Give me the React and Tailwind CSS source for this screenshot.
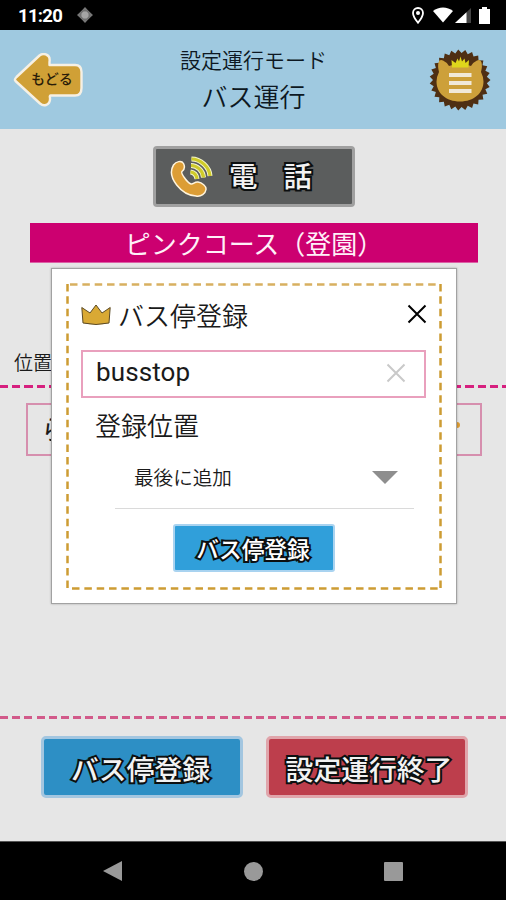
const OUTLINE = "[paint-order:stroke_fill] [-webkit-text-stroke:4px_#0c0f10]";

// zigzag outline of the lion's mane
function manePoints(cx, cy, outer, inner, teeth) {
  const pts = [];
  for (let i = 0; i < teeth * 2; i++) {
    const r = i % 2 ? inner : outer;
    const a = (Math.PI * i) / teeth;
    pts.push(`${(cx + r * Math.cos(a)).toFixed(2)},${(cy + r * Math.sin(a)).toFixed(2)}`);
  }
  return pts.join(" ");
}

function StatusBar() {
  return (
    <div className="h-[30px] shrink-0 bg-black flex items-center justify-between pl-[18px] pr-[16px] text-white">
      <div className="flex items-center gap-[14px] pt-[2px]">
        <span className="font-['Roboto'] font-bold text-[18.5px] leading-none w-[45px] tracking-[-0.7px]">11:20</span>
        <svg width="16" height="16" viewBox="0 0 16 16" className="-mt-[2px]">
          <path d="M8 0l3 3.2 1.8 1.8L16 8l-3.2 3L11 12.8 8 16l-3-3.2L3.2 11 0 8l3.2-3L5 3.2z" fill="#777" />
          <circle cx="8" cy="8" r="4.2" fill="#a4a4a4" stroke="#666" />
        </svg>
      </div>
      <div className="flex items-center">
        <svg width="12" height="17" viewBox="0 0 12 17" className="mr-[9px]">
          <path d="M6 1a5 5 0 0 0-5 5c0 3.6 5 9.8 5 9.8S11 9.6 11 6a5 5 0 0 0-5-5z" fill="none" stroke="#fff" strokeWidth="1.8" />
          <circle cx="6" cy="6" r="2" fill="#fff" />
        </svg>
        <svg width="20" height="16" viewBox="0 0 20 16" className="mr-[2px]">
          <path d="M0 4C5.5-.8 14.500-.8 20 4L10 15.500z" fill="#fff" />
        </svg>
        <svg width="17" height="17" viewBox="0 0 17 17" className="mr-[7px]">
          <path d="M16 1v15H0z" fill="#444" />
          <path d="M11.500 5.200v10.800H0z" fill="#fff" />
        </svg>
        <svg width="11" height="17" viewBox="0 0 11 17">
          <path d="M3 0h5v2h3v15H0V2h3z" fill="#fff" />
        </svg>
      </div>
    </div>
  );
}

function BackButton() {
  return (
    <button className="relative w-[70px] h-[54px] block">
      <svg width="70" height="54" viewBox="0 0 70 54">
        <path
          d="M2.500 28Q1 26.500 3.500 24L26.500 2.500Q30 0 33 1.500 37.500 3 36.500 9V12H62Q68.500 12 68.500 19V35Q68.500 42.500 62 42.500H37.500Q36.500 42.500 37 45 37.500 50.500 33 52 30 53 27 50.500Z"
          fill="#d0a036"
          stroke="#f6f0e4"
          strokeWidth="2.400"
          strokeLinejoin="round"
        />
      </svg>
      <span className="absolute left-[18px] top-[15px] text-[14px] leading-[20px] font-medium text-[#2a1c08] whitespace-nowrap">
        もどる
      </span>
    </button>
  );
}

function LionMenu() {
  return (
    <svg width="62" height="62" viewBox="0 0 62 62">
      <polygon points={manePoints(31, 31, 30.5, 27, 27)} fill="#4f2f13" />
      <path
        d="M10 23Q8.500 17 9.500 13.500 10.500 10 14 11.500 17.500 13 20 17 31 13 42 17 44.500 13 48 11.500 51.500 10 52.500 13.500 53.500 17 52 23 54.500 28 54.500 32.500C54.500 44 45 52.500 31 52.500S7.500 44 7.500 32.500Q7.500 28 10 23z"
        fill="#cda03a"
      />
      <path d="M23 18.500l-.5-7.500 4 3L28.500 9.500l1.500 3L31.500 7.500l1.500 5L35.500 9.500l1 4.500 3.500-3-.5 7.500z" fill="#dfd61c" />
      <g fill="#f1e9d8">
        <rect x="20" y="24" width="22.500" height="4" />
        <rect x="20" y="32" width="22.500" height="4" />
        <rect x="20" y="40" width="22.500" height="4" />
      </g>
    </svg>
  );
}

function Header() {
  return (
    <header className="h-[99px] shrink-0 bg-[#9fc9e0] flex items-center justify-between pl-[13px] pr-[15px] text-[#0d1822]">
      <BackButton />
      <div className="text-center -mt-[3px] pr-[18px] pl-[13px]">
        <p className="text-[21px] leading-[36px] font-[350]">設定運行モード</p>
        <p className="text-[26px] leading-[38px] font-[350]">バス運行</p>
      </div>
      <button className="block">
        <LionMenu />
      </button>
    </header>
  );
}

function PhoneIcon() {
  return (
    <svg width="44" height="44" viewBox="0 0 44 44">
      <path
        d="M3.500 10C6 6.500 11.500 5 13.500 8.500c1.500 3 1 6-1.500 8-1.500 1.500 5 11 9 12.500 2.500.5 3.500-2.500 7-2 4 .5 8.500 4.500 8 7.500-.5 4-5 7.500-10 6.500C12 40.500-4 22.500 3.500 10z"
        fill="#dc9d35"
        stroke="#fff4dc"
        strokeWidth="1.500"
      />
      <g fill="none">
        <g stroke="#f6f6d0" strokeWidth="5">
          <path d="M21.500 4c9 0 18 8 18.500 17M21 10.500c6 0 12 5 12.500 12M20.500 17c4 .5 6 3 6.500 7" />
        </g>
        <g stroke="#cfcb2a" strokeWidth="3.200">
          <path d="M21.500 4c9 0 18 8 18.500 17M21 10.500c6 0 12 5 12.500 12M20.500 17c4 .5 6 3 6.500 7" />
        </g>
      </g>
    </svg>
  );
}

function Crown() {
  return (
    <svg width="30" height="22" viewBox="0 0 30 22">
      <path
        d="M.8 3.500L9 9 15 1l6 8 8.200-5.500-1.200 15.500Q15 22 2 19z"
        fill="#d9a934"
        stroke="#5b4a25"
        strokeWidth="1"
        strokeLinejoin="round"
      />
    </svg>
  );
}

function Cross({ className }) {
  return (
    <svg width="20" height="20" viewBox="0 0 20 20" className={className}>
      <path d="M1.500 1.500l17 17M18.500 1.500l-17 17" stroke="currentColor" strokeWidth="2" />
    </svg>
  );
}

function BusStopDialog() {
  return (
    <div className="absolute left-[51px] top-[139px] w-[406px] h-[336px] bg-white border border-[#a2a2a2] pt-[14px] pl-[14px] shadow-[0_0_2px_#0004]">
      <div className="relative w-[376px] h-[308px] pt-[17px] px-[15px]">
        {/* dashed frame */}
        <svg width="376" height="308" className="absolute inset-0" fill="none" stroke="#cd9c33" strokeWidth="2.500">
          <path d="M4 1.500H374" stroke="#d8b060" strokeDasharray="7.500 4.850" />
          <path d="M6 305.500H374" strokeDasharray="7.500 4.850" />
          <path d="M1.500 1v305" strokeDasharray="7.500 4.850" />
          <path d="M374.500 1v305" strokeDasharray="7.500 4.850" />
        </svg>

        <div className="relative flex items-center h-[32px] -mt-[1px]">
          <Crown />
          <h2 className="ml-[7px] -mt-[1px] text-[26px] leading-[32px] font-[350]">バス停登録</h2>
          <Cross className="ml-auto -mt-[2px] text-black" />
        </div>

        <div className="relative mt-[19px] h-[48px] w-[345px] border-2 border-[#e9a0bd] flex items-center pl-[13px] pr-[18px]">
          <span className="font-['Roboto'] text-[26px] leading-none tracking-[0.1px] -mt-[4px]">busstop</span>
          <Cross className="ml-auto -mt-[2px] text-[#c9c9c9]" />
        </div>

        <p className="relative mt-[9px] ml-[14px] text-[26px] leading-[36px] font-[350]">登録位置</p>

        <div className="relative mt-[14px] ml-[34px] w-[299px] h-[52px] border-b-[1.5px] border-[#dadada] flex items-start pl-[19px] pr-[16px]">
          <span className="text-[19.6px] leading-[40px] font-[350]">最後に追加</span>
          <svg width="26" height="13" viewBox="0 0 26 13" className="ml-auto mt-[14px]">
            <path d="M0 0h26L13 13z" fill="#8e8e8e" />
          </svg>
        </div>

        <button className="relative block mt-[15px] ml-[92px] w-[162px] h-[48px] rounded-[3px] border-2 border-[#a9d3f0] bg-[#309fda] text-white font-medium text-[22.7px] leading-[46px] pr-[2px]">
          <span className={OUTLINE}>バス停登録</span>
        </button>
      </div>
    </div>
  );
}

function NavBar() {
  return (
    <nav className="h-[59px] shrink-0 bg-black border-t border-[#555] flex items-center justify-between pl-[103px] pr-[103px]">
      <svg width="19" height="22" viewBox="0 0 19 22">
        <path d="M19 1v20L0 11z" fill="#999" />
      </svg>
      <div className="w-[19px] h-[19px] rounded-full bg-[#999]" />
      <div className="w-[19px] h-[19px] rounded-[1px] bg-[#999]" />
    </nav>
  );
}

export default function App() {
  return (
    <div className="w-[506px] h-[900px] flex flex-col overflow-hidden bg-[#e6e6e6] text-[#1a1a1a] font-['Noto_Sans_CJK_JP',sans-serif]">
      <StatusBar />
      <Header />

      <main className="relative flex-1 flex flex-col">
        <button className="mt-[17px] ml-[153px] w-[202px] h-[61px] shrink-0 rounded-[4px] border-3 border-[#a0a0a0] bg-[#5b5d5d] flex items-center pl-[14px] text-[#f2f2f2] font-medium text-[28.5px] leading-none">
          <PhoneIcon />
          <span className={`ml-[15px] -mt-[2px] ${OUTLINE}`}>電</span>
          <span className={`ml-[26px] -mt-[2px] ${OUTLINE}`}>話</span>
        </button>

        <div className="mt-[16px] ml-[30px] w-[448px] h-[40px] shrink-0 bg-[#cc0070] border-b border-[#dc5fa5] text-[#fff0f8] text-center text-[26px] leading-[39px]">
          ピンクコース（登園）
        </div>

        <p className="mt-[84px] ml-[14px] text-[19px] leading-[30px] font-[350]">位置</p>
        <div className="mt-[8px] h-[3px] shrink-0 bg-[repeating-linear-gradient(90deg,#d6207f_0_8px,transparent_8px_12.25px)]" />
        <div className="mt-[15px] ml-[26px] w-[456px] h-[53px] shrink-0 border-2 border-[#d68fae] pl-[13px] flex items-center text-[27px]">
          <span>ら</span>
          <span className="ml-auto mr-[20px] mt-[-10px] w-[6px] h-[6px] rounded-full bg-[#dc9d35]" />
        </div>

        <div className="mt-auto mb-[17px] h-[3px] shrink-0 bg-[repeating-linear-gradient(90deg,#d25a8a_0_8px,transparent_8px_12.2px)]" />
        <div className="flex gap-[23px] pl-[41px] mb-[43px] text-[27.8px] font-medium text-[#f2f2f2] leading-[58px]">
          <button className="w-[202px] h-[62px] rounded-[5px] border-3 border-[#a3c6e0] bg-[#2d8fc5] pr-[3px]">
            <span className={OUTLINE}>バス停登録</span>
          </button>
          <button className="w-[202px] h-[62px] rounded-[5px] border-3 border-[#e0a5ab] bg-[#bd3e4c] pl-[4px]">
            <span className={OUTLINE}>設定運行終了</span>
          </button>
        </div>

        <BusStopDialog />
      </main>

      <NavBar />
    </div>
  );
}
